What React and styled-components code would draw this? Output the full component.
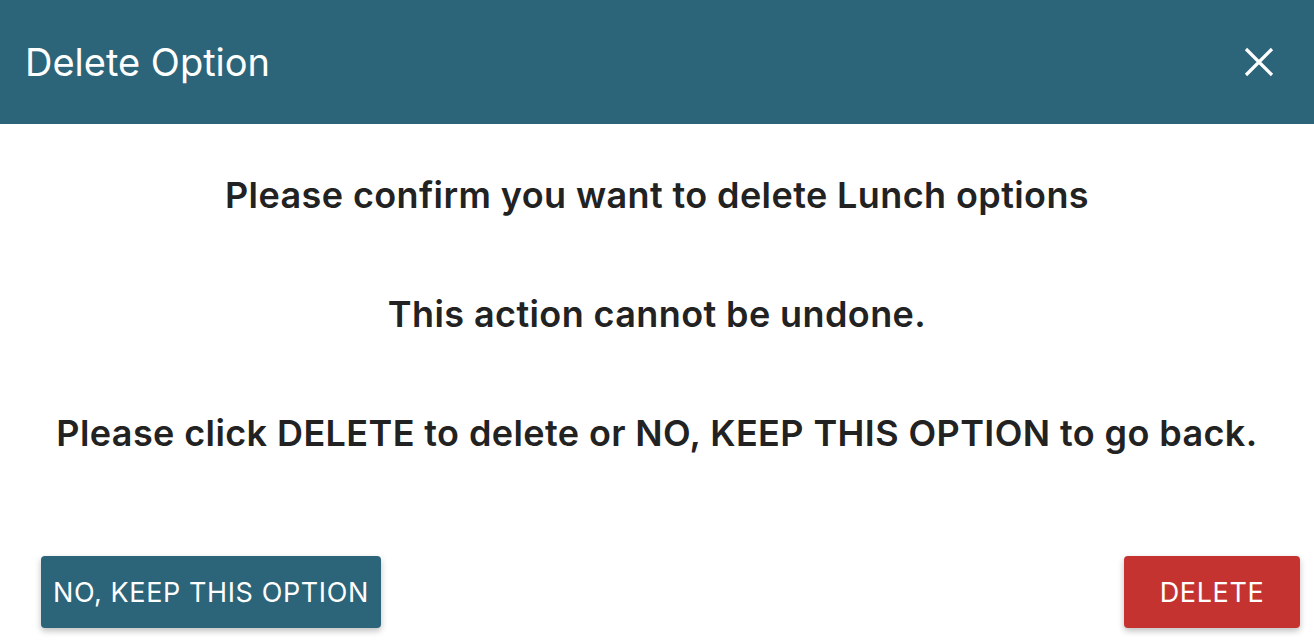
import React from "react";
import styled, { createGlobalStyle } from "styled-components";

const GlobalStyle = createGlobalStyle`
  html, body {
    margin: 0;
    padding: 0;
    background: #ffffff;
    font-family: Inter, "Noto Sans", sans-serif;
  }
`;

const Dialog = styled.div`
  width: 1314px;
  height: 644px;
  display: flex;
  flex-direction: column;
  background: #ffffff;
  overflow: hidden;
`;

const Header = styled.header`
  height: 124px;
  background: #2c6479;
  display: flex;
  align-items: center;
  justify-content: space-between;
  padding: 0 35px 0 25px;
  box-sizing: border-box;
  h2 {
    margin: 0;
    color: #ffffff;
    font-size: 38px;
    font-weight: 400;
  }
`;

const CloseButton = styled.button`
  background: none;
  border: none;
  padding: 0;
  width: 40px;
  height: 40px;
  display: flex;
  align-items: center;
  justify-content: center;
  cursor: pointer;
`;

const Body = styled.div`
  flex: 1;
  display: flex;
  flex-direction: column;
  align-items: center;
  padding-top: 51px;
`;

const Message = styled.p`
  margin: 0;
  height: 119px;
  color: #222222;
  font-size: 36px;
  font-weight: 600;
  letter-spacing: 0.4px;
  text-align: center;
  line-height: 40px;
`;

const Footer = styled.div`
  display: flex;
  justify-content: space-between;
  padding: 0 14px 16px 41px;
`;

const Button = styled.button`
  height: 72px;
  padding: 0 12px;
  border: none;
  border-radius: 4px;
  background: ${(p) => (p.$danger ? "#c53331" : "#2c6479")};
  color: #ffffff;
  font-family: Inter, "Noto Sans", sans-serif;
  font-size: 27px;
  font-weight: 400;
  letter-spacing: 0.6px;
  text-transform: uppercase;
  box-shadow: 0 3px 6px rgba(0, 0, 0, 0.25);
  cursor: pointer;
  min-width: ${(p) => (p.$danger ? "176px" : "auto")};
`;

function App() {
  return (
    <>
      <GlobalStyle />
      <Dialog>
        <Header>
          <h2>Delete Option</h2>
          <CloseButton aria-label="close">
            <svg width="30" height="30" viewBox="0 0 30 30">
              <path d="M2 2 L28 28 M28 2 L2 28" stroke="#fff" strokeWidth="3.2" />
            </svg>
          </CloseButton>
        </Header>
        <Body>
          <Message>Please confirm you want to delete Lunch options</Message>
          <Message>This action cannot be undone.</Message>
          <Message>Please click DELETE to delete or NO, KEEP THIS OPTION to go back.</Message>
        </Body>
        <Footer>
          <Button>No, keep this option</Button>
          <Button $danger>Delete</Button>
        </Footer>
      </Dialog>
    </>
  );
}

export default App;
